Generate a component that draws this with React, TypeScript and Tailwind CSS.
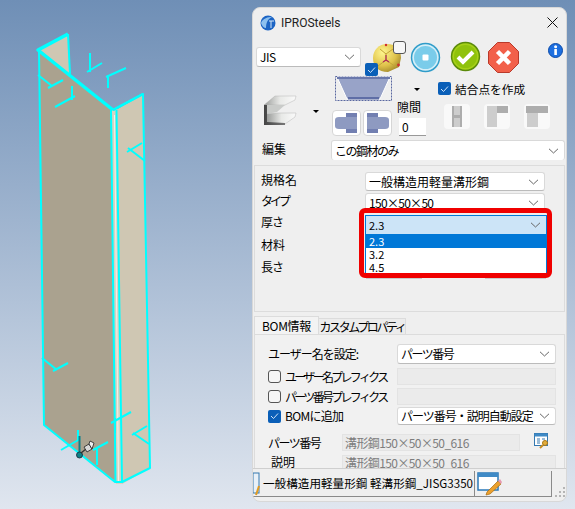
import React from "react";

const font = { fontFamily: '"Noto Sans CJK JP", "Noto Sans", sans-serif' };

function Chevron({ className = "" }: { className?: string }) {
  return (
    <svg width="11" height="6" viewBox="0 0 11 6" className={`shrink-0 ${className}`}>
      <path d="M1 0.8 L5.5 5 L10 0.8" fill="none" stroke="#666" strokeWidth="1" />
    </svg>
  );
}

function Select({ text, className = "", textClass = "" }: { text: string; className?: string; textClass?: string }) {
  return (
    <div className={`flex items-center justify-between bg-white border border-[#d9d9d9] border-b-[#bbb] rounded-[3px] pl-[3px] pr-[5px] text-[12px] leading-none text-black ${className}`}>
      <span className={`whitespace-nowrap ${textClass}`}>{text}</span>
      <Chevron />
    </div>
  );
}

function Check({ on = false, className = "" }: { on?: boolean; className?: string }) {
  return on ? (
    <span className={`flex shrink-0 w-[13px] h-[13px] items-center justify-center rounded-[2px] bg-[#0a5fb8] ${className}`}>
      <svg width="9" height="8" viewBox="0 0 9 8">
        <path d="M1 4 L3.5 6.5 L8 1.5" fill="none" stroke="#cfe3f7" strokeWidth="1" />
      </svg>
    </span>
  ) : (
    <span className={`block shrink-0 w-[13px] h-[13px] rounded-[3px] border border-[#555] bg-[#f6f6f6] ${className}`} />
  );
}

function Canvas() {
  const c = "#00ffff";
  const ticks = [
    "M90 53V72M87 72L102 63",
    "M108 88V75M106 77L126 68",
    "M38 75L52 86M48 88L63 80",
    "M72 86V100M55 107L75 96",
    "M145 161L128 148M127 152L142 143",
    "M42 358L57 370M53 371L68 363",
    "M115 433V418M111 423L131 412",
    "M149 444L133 433M132 435L147 426",
    "M61 450L80 439",
    "M97 465V448M93 450L108 442",
  ];
  return (
    <svg viewBox="0 0 252 509" className="w-[252px] h-[509px] shrink-0">
      <polygon points="39,50 68,34 70,78" fill="#cfc7b3" />
      <polygon points="39,50 112,110 116,482 44,425" fill="#aaa28f" />
      <polygon points="116,110 143,94 150,468 122,484" fill="#cfc7b3" />
      <polygon points="111,110 117,109 122,484 116,484" fill="#d9d2c2" />
      <path d="M114.5 115L118.5 482" stroke="#f4f1ea" strokeWidth="1" />
      <g fill="none" stroke={c} strokeLinejoin="round">
        <path d="M39 50L44 425L115 482H122L150 468L143 94L113 110" strokeWidth="2" />
        <path d="M68 34L70 74" strokeWidth="2" />
        <path d="M111 110L115.5 482M116.5 110L122 483" strokeWidth="2" />
        <path d="M68 34L38 50L113 110" strokeWidth="3.5" />
        <path d="M113 110L143 94" strokeWidth="2.5" />
        {ticks.map((d) => (
          <path key={d} d={d} strokeWidth="2" />
        ))}
        <path d="M78 430V440" strokeWidth="2" />
        <path d="M79.5 436V452" stroke="#0f7f86" strokeWidth="2" />
      </g>
      <circle cx="79.5" cy="455" r="3" fill="#0f7f86" stroke="#123" strokeWidth="0.8" />
      <path d="M81 453L86 449" stroke="#333" strokeWidth="1.5" />
      <path d="M84 447L89 444L92 449L87 452Z" fill="#d8d8d8" stroke="#222" strokeWidth="0.8" />
      <path d="M89 444L90 441L94 443L92 449Z" fill="#eee" stroke="#222" strokeWidth="0.8" />
    </svg>
  );
}

function Gold() {
  return (
    <svg width="30" height="30" viewBox="0 0 30 30">
      <defs>
        <radialGradient id="gold" cx="35%" cy="30%" r="80%">
          <stop offset="0" stopColor="#fff68f" />
          <stop offset="0.6" stopColor="#dfc24a" />
          <stop offset="1" stopColor="#9a8128" />
        </radialGradient>
      </defs>
      <path d="M15 1 C24 1 29 7 29 15 L27 24 L16 29 C6 29 1 23 1 15 C1 7 7 1 15 1Z" fill="url(#gold)" />
      <path d="M8 6L14 11L21 6M14 11V17M14 17L6 23M14 17L24 24" stroke="#c2a437" strokeWidth="1" fill="none" />
      <circle cx="14" cy="2" r="1.2" fill="#d02f2f" />
      <path d="M14 12V18M11 19L14 17L17 19" stroke="#b0285a" strokeWidth="1.2" fill="none" />
      <circle cx="26.5" cy="22" r="1.4" fill="#d02f2f" />
    </svg>
  );
}

function Round({ kind }: { kind: "blue" | "green" }) {
  const blue = kind === "blue";
  return (
    <svg width="31" height="31" viewBox="0 0 31 31">
      <circle cx="15.5" cy="15.5" r="14.7" fill={blue ? "#2f9cc9" : "#5a8a0a"} />
      <circle cx="15.5" cy="15.5" r="13.2" fill={blue ? "#d5eff8" : "#a6d117"} />
      <circle cx="15.5" cy="15.5" r="11.5" fill={blue ? "#7accea" : "#8fc20c"} />
      {blue ? (
        <rect x="12.5" y="12.5" width="6" height="6" rx="1" fill="#fff" />
      ) : (
        <path d="M8 16L13 21L23 11" fill="none" stroke="#fff" strokeWidth="4" />
      )}
    </svg>
  );
}

function Stop() {
  return (
    <svg width="31" height="31" viewBox="0 0 31 31">
      <polygon points="9.5,0.5 21.5,0.5 30.5,9.5 30.5,21.5 21.5,30.5 9.5,30.5 0.5,21.5 0.5,9.5" fill="#f2604a" stroke="#b9392a" />
      <path d="M9.5 9.5L21.5 21.5M21.5 9.5L9.5 21.5" stroke="#fff" strokeWidth="4.5" />
    </svg>
  );
}

function CSteel() {
  return (
    <svg width="34" height="32" viewBox="0 0 34 32">
      <defs>
        <linearGradient id="fl" x1="0" y1="0" x2="1" y2="0">
          <stop offset="0" stopColor="#9a9c9a" />
          <stop offset="0.5" stopColor="#e8e9e7" />
          <stop offset="1" stopColor="#fafafa" />
        </linearGradient>
        <linearGradient id="wb" x1="0" y1="0" x2="1" y2="0">
          <stop offset="0" stopColor="#444" />
          <stop offset="1" stopColor="#777" />
        </linearGradient>
      </defs>
      <polygon points="1,10 12,1 33,1 32,5 22,10" fill="url(#fl)" stroke="#aaa" strokeWidth="0.4" />
      <polygon points="4,10 22,10 14,17 4,19" fill="#c9cbc9" />
      <polygon points="4,19 14,18 33,18 32,22 22,29 4,29" fill="url(#fl)" stroke="#aaa" strokeWidth="0.4" />
      <polygon points="1,10 4,10 4,27 22,28 22,30 1,30" fill="url(#wb)" />
    </svg>
  );
}

function Beam() {
  return (
    <svg width="57" height="25" viewBox="0 0 57 25">
      <rect x="0.5" y="0.5" width="56" height="24" fill="none" stroke="#5a68a0" strokeDasharray="2 1" />
      <polygon points="2,1 55,1 45,23 12,23" fill="#98a3c8" stroke="#fff" />
      <rect x="2" y="1" width="53" height="2" fill="#6a78ac" />
      <rect x="13" y="21" width="31" height="2.5" fill="#5f6ea6" />
    </svg>
  );
}

function Cap({ flip = false }: { flip?: boolean }) {
  return (
    <div className="flex w-[29px] h-[26px] items-center justify-center bg-white border border-[#d6d6d6] rounded-[4px]">
      <svg width="23" height="20" viewBox="0 0 23 20" className={flip ? "-scale-x-100" : ""}>
        <path d="M11 0H22V20H11V16H4Q0 16 0 13V7Q0 4 4 4H11Z" fill="#8e9ac1" />
        <path d="M11 0H22V4H11ZM11 16H22V20H11Z" fill="#5f6ea6" opacity="0.6" />
      </svg>
    </div>
  );
}

function Joint({ d1, d2 }: { d1: string; d2: string }) {
  return (
    <div className="flex w-[26px] h-[25px] items-center justify-center bg-[#f9f9f9] rounded-[4px]">
      <svg width="22" height="21" viewBox="0 0 22 21">
        <path d={d1} fill="#cdcdcd" />
        <path d={d2} fill="#adadad" />
      </svg>
    </div>
  );
}

function Row({ label, text, className = "", labelClass = "", textClass = "" }: { label: string; text?: string; className?: string; labelClass?: string; textClass?: string }) {
  return (
    <div className={`flex items-center h-[19px] ${className}`}>
      <span className={`w-[104px] pb-[4px] text-[12px] leading-none ${labelClass}`}>{label}</span>
      {text ? <Select text={text} textClass={textClass} className="w-[180px] h-[19px]" /> : null}
    </div>
  );
}

export default function App() {
  return (
    <div className="relative w-[575px] h-[509px] flex overflow-hidden bg-gradient-to-b from-[#6f8fb6] to-[#e0e6ef] text-black" style={font}>
      <Canvas />
      <div className="mt-[7px] w-[315px] h-[495px] flex flex-col bg-[#efefef] rounded-[8px] border border-[#d8d8d8] overflow-hidden shrink-0">
        {/* title */}
        <div className="flex items-center h-[29px] pl-[7px] pr-[7px] shrink-0">
          <svg width="16" height="16" viewBox="0 0 16 16">
            <circle cx="8" cy="8" r="7.5" fill="#1c64c4" />
            <path d="M1 8C3 3 8 2 12 2C8 4 6 7 6 13C4 13 2 11 1 8Z" fill="#8cc0ef" />
            <path d="M9 6H14M11 6V13" stroke="#d5e8f8" strokeWidth="1" />
          </svg>
          <span className="ml-[5px] text-[12px] leading-none text-[#222]" style={{ fontFamily: 'Roboto, sans-serif' }}>IPROSteels</span>
          <svg width="11" height="11" viewBox="0 0 11 11" className="ml-auto mr-[1px]">
            <path d="M0.5 0.5L10.5 10.5M10.5 0.5L0.5 10.5" stroke="#111" strokeWidth="1" />
          </svg>
        </div>

        {/* toolbar row 1 */}
        <div className="flex items-start h-[39px] pl-[3px] shrink-0">
          <Select text="JIS" className="w-[105px] h-[20px] mt-[10px]" textClass="tracking-[-0.5px]" />
          <div className="relative w-[30px] h-[30px] ml-[11px] mt-[6px]">
            <Gold />
            <Check className="absolute -right-[4px] -top-[2px]" />
            <Check on className="absolute -left-[7px] bottom-[-3px]" />
          </div>
          <div className="ml-[8px] mt-[5px]"><Round kind="blue" /></div>
          <div className="ml-[9px] mt-[4px]"><Round kind="green" /></div>
          <div className="ml-[7px] mt-[5px]"><Stop /></div>
          <svg width="15" height="15" viewBox="0 0 15 15" className="ml-[29px] mt-[6px]">
            <circle cx="7.5" cy="7.5" r="7" fill="#1d6fe0" stroke="#0b4aa8" />
            <rect x="6.3" y="6" width="2.6" height="6" fill="#fff" />
            <circle cx="7.6" cy="3.8" r="1.5" fill="#fff" />
          </svg>
        </div>

        {/* toolbar row 2 */}
        <div className="flex h-[60px] shrink-0">
          <div className="flex items-center w-[79px] pl-[10px] pb-[2px]">
            <div className="mt-[12px] flex items-center">
              <CSteel />
              <span className="ml-[16px] w-0 h-0 border-x-[3px] border-x-transparent border-t-[3px] border-t-black" />
            </div>
          </div>
          <div className="flex flex-col w-[62px]">
            <div className="ml-[3px]"><Beam /></div>
            <div className="flex gap-[2px] mt-[9px]">
              <Cap />
              <Cap flip />
            </div>
          </div>
          <div className="flex flex-col w-[44px] pl-[3px]">
            <span className="ml-[17px] mt-[12px] w-0 h-0 border-x-[3px] border-x-transparent border-t-[3px] border-t-black" />
            <span className="mt-[10px] text-[12px] leading-none">隙間</span>
            <div className="ml-[2px] mt-[5px] w-[27px] h-[18px] bg-white border-b border-[#999] text-[12px] leading-[18px] pl-[3px]">0</div>
          </div>
          <div className="flex flex-col">
            <div className="flex items-center mt-[6px] gap-[4px]">
              <Check on />
              <span className="text-[11.7px] leading-none">結合点を作成</span>
            </div>
            <div className="flex gap-[14px] mt-[9px] ml-[6px]">
              <Joint d1="M6 0H16V21H6Z" d2="M6 0H8V21H6ZM14 0H16V21H14ZM6 9H16V12H6Z" />
              <Joint d1="M1 0H11V21H1Z" d2="M11 0H22V7H11Z" />
              <Joint d1="M1 7H12V21H1Z" d2="M0 0H22V7H0Z" />
            </div>
          </div>
        </div>

        {/* edit */}
        <div className="flex items-start h-[29px] pt-[4px] shrink-0">
          <span className="ml-[9px] w-[69px] text-[12px] leading-[18px]">編集</span>
          <Select text="この鋼材のみ" textClass="tracking-[-1.5px]" className="w-[234px] h-[20px] !border-b-0" />
        </div>

        {/* parameters */}
        <div className="relative mx-[1px] h-[147px] shrink-0 border border-[#dcdcdc] px-[6px] pt-[6px] flex flex-col gap-[2px]">
          <Row label="規格名" text="一般構造用軽量溝形鋼" />
          <Row label="タイプ" text="150×50×50" labelClass="tracking-[-3px]" textClass="tracking-[-0.7px]" />
          <Row label="厚さ" labelClass="tracking-[-1px]" />
          <Row label="材料" className="mt-[2px]" />
          <Row label="長さ" labelClass="tracking-[-1px]" className="mt-[1px]" />
          <div className="absolute left-[111px] top-[96px] w-[56px] h-[17px] bg-[#c9c9c9]" />
          <div className="absolute left-[230px] top-[96px] w-[61px] h-[17px] bg-[#c9c9c9]" />
          {/* open combo */}
          <div className="absolute left-[110px] top-[49px] w-[182px]">
            <div className="flex items-center justify-between h-[20px] bg-[#cce4f7] border border-[#0078d7] pl-[3px] pr-[5px] text-[11px] leading-none">
              <span>2.3</span>
              <Chevron />
            </div>
            <div className="bg-white border border-[#0078d7] border-t-0 h-[39px] text-[11px] leading-[13px]">
              <div className="bg-[#0078d7] text-white pl-[3px]">2.3</div>
              <div className="pl-[3px]">3.2</div>
              <div className="pl-[3px]">4.5</div>
            </div>
          </div>
          <div className="absolute left-[104px] top-[42px] w-[193px] h-[70px] border-[5px] border-[#f00000] rounded-[6px]" />
        </div>

        {/* tabs */}
        <div className="flex items-end h-[22px] ml-[1px] shrink-0 text-[12px] leading-none">
          <div className="flex items-center justify-center w-[65px] h-[18px] bg-[#f3f3f3] border border-[#dcdcdc] border-b-0 tracking-[-0.3px]">BOM情報</div>
          <div className="flex items-center justify-center w-[87px] h-[16px] bg-[#ececec] border border-[#dcdcdc] border-b-0 border-l-0 tracking-[-2.4px]">カスタムプロパティ</div>
        </div>

        {/* bom panel */}
        <div className="flex-1 mx-[1px] min-h-0 overflow-hidden border-t border-x border-[#dcdcdc] bg-[#f1f1f1] pl-[13px] pr-[8px] pt-[9px] text-[12px] leading-none">
          <div className="flex items-center h-[20px]">
            <span className="w-[129px] shrink-0 tracking-[-1px]">ユーザー名を設定:</span>
            <Select text="パーツ番号" textClass="tracking-[-1.5px]" className="flex-1 min-w-0 h-[20px]" />
          </div>
          <div className="flex items-center h-[17px] mt-[4px]">
            <Check />
            <span className="ml-[4px] w-[112px] shrink-0 whitespace-nowrap tracking-[-2.7px]">ユーザー名プレフィクス</span>
            <div className="flex-1 h-[17px] bg-[#ebebeb] border border-[#e3e3e3]" />
          </div>
          <div className="flex items-center h-[17px] mt-[3px]">
            <Check />
            <span className="ml-[4px] w-[112px] shrink-0 whitespace-nowrap tracking-[-2.7px]">パーツ番号プレフィクス</span>
            <div className="flex-1 h-[17px] bg-[#ebebeb] border border-[#e3e3e3]" />
          </div>
          <div className="flex items-center h-[18px] mt-[2px]">
            <Check on />
            <span className="ml-[4px] w-[112px] shrink-0 tracking-[-0.7px]">BOMに追加</span>
            <Select text="パーツ番号・説明自動設定" textClass="tracking-[-1px]" className="flex-1 min-w-0 h-[18px]" />
          </div>
          <div className="flex items-center h-[17px] mt-[9px]">
            <span className="w-[74px] shrink-0 tracking-[-1.5px]">パーツ番号</span>
            <div className="w-[178px] h-[17px] bg-[#ebebeb] border border-[#e3e3e3] text-[#7d7d7d] pl-[2px] leading-[15px] whitespace-nowrap tracking-[-0.6px]">溝形鋼150×50×50_616</div>
            <svg width="17" height="16" viewBox="0 0 17 16" className="ml-[14px] -mt-[3px]">
              <rect x="0.5" y="0.5" width="13" height="12" fill="#fff" stroke="#3478b0" />
              <rect x="0.5" y="0.5" width="13" height="3" fill="#3f8ac6" />
              <path d="M3 6H6M3 8H6M3 10H6M8 6H11" stroke="#3478b0" />
              <circle cx="11" cy="10" r="2.5" fill="#e3ad3a" stroke="#a97716" />
              <path d="M9 12L6 15" stroke="#c98f24" strokeWidth="2" />
            </svg>
          </div>
          <div className="flex items-start h-[14px] mt-[4px]">
            <span className="w-[74px] shrink-0 pl-[3px] leading-[14px]">説明</span>
            <div className="flex-1 h-[14px] bg-[#ebebeb] border border-[#e3e3e3] border-b-0 text-[#7d7d7d] pl-[2px] leading-[13px] whitespace-nowrap tracking-[-0.6px]">溝形鋼150×50×50_616</div>
          </div>
        </div>

        {/* bottom */}
        <div className="flex items-start h-[33px] shrink-0 border-t border-[#cfcfcf] pt-[2px] text-[12px] leading-none">
          <div className="flex items-center w-[222px] h-[26px] border-r border-b border-[#8a8a8a] overflow-hidden">
            <svg width="8" height="24" viewBox="0 0 8 24" className="shrink-0">
              <rect x="0" y="1" width="6" height="20" fill="#e8f0f8" stroke="#3478b0" />
              <path d="M6 14L3 23" stroke="#e09a20" strokeWidth="2" />
            </svg>
            <span className="ml-[2px] whitespace-nowrap text-[11.6px]">一般構造用軽量形鋼 軽溝形鋼_JISG3350</span>
          </div>
          <div className="flex items-center w-[77px] h-[26px] border-r border-b border-[#8a8a8a] pl-[2px]">
            <svg width="25" height="24" viewBox="0 0 25 24">
              <rect x="1" y="1" width="20" height="17" fill="#fff" stroke="#2a78b8" strokeWidth="1.5" />
              <rect x="1" y="1" width="20" height="4" fill="#3f8ac6" />
              <path d="M10 20L21 9L24 12L13 22L9 23Z" fill="#eca02c" stroke="#a66a12" strokeWidth="0.7" />
              <path d="M21 9L23 7L25 10L24 12Z" fill="#e79ab0" />
            </svg>
          </div>
          <svg width="12" height="12" viewBox="0 0 12 12" className="ml-[2px] mt-[15px]">
            <path d="M9 1h2v2H9zM5 5h2v2H5zM9 5h2v2H9zM1 9h2v2H1zM5 9h2v2H5zM9 9h2v2H9z" fill="#b5b5b5" />
          </svg>
        </div>
      </div>
    </div>
  );
}
